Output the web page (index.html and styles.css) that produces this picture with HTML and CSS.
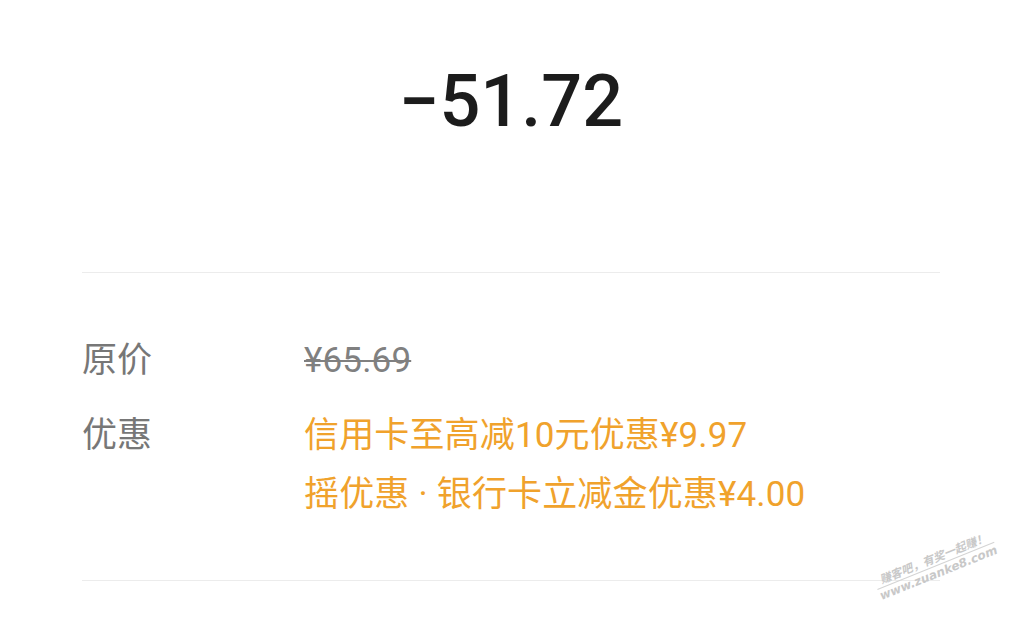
FILE: index.html
```html
<!DOCTYPE html>
<html lang="zh-CN">
<head>
    <meta charset="UTF-8">
    <title>账单详情</title>
    <link rel="stylesheet" href="styles.css">
</head>
<body>
    <div class="page">
        <div class="amount">−51.72</div>
        <div class="divider"></div>

        <div class="details">
            <div class="row">
                <div class="label">原价</div>
                <div class="value original">¥65.69</div>
            </div>
            <div class="row">
                <div class="label">优惠</div>
                <div class="value discounts">
                    <p>信用卡至高减10元优惠¥9.97</p>
                    <p>摇优惠<span class="dot">·</span>银行卡立减金优惠¥4.00</p>
                </div>
            </div>
        </div>

        <div class="divider"></div>
    </div>

    <div class="watermark">
        <div class="wm-top">赚客吧，有奖一起赚！</div>
        <div class="wm-bottom">www.zuanke8.com</div>
    </div>
</body>
</html>
```

FILE: styles.css
```css
body {
    margin: 0;
    background-color: #fff;
    font-family: Roboto, "Noto Sans CJK SC", sans-serif;
    overflow: hidden;
}
.page {
    padding: 0 80px 0 82px;
}
.amount {
    height: 272px;
    padding-top: 59px;
    box-sizing: border-box;
    text-align: center;
    font-size: 72px;
    font-weight: 500;
    line-height: 86px;
    color: #1c1c1c;
}
.divider {
    height: 1px;
    background-color: #ececec;
}
.details {
    padding-top: 66px;
    padding-bottom: 63px;
}
.row {
    display: flex;
    margin-bottom: 31px;
}
.row:last-child {
    margin-bottom: 0;
}
.label {
    width: 222px;
    font-size: 35px;
    line-height: 44px;
    color: #777;
}
.value {
    font-size: 35px;
    line-height: 44px;
    letter-spacing: 0.15px;
}
.original {
    color: #808080;
    text-decoration: line-through;
    text-decoration-thickness: 2px;
}
.discounts {
    color: #f0a22c;
}
.discounts p {
    margin: 0 0 15px 0;
}
.discounts p:last-child {
    margin-bottom: 0;
}
.dot {
    margin: 0 9px;
}
.watermark {
    position: absolute;
    left: 872px;
    top: 576px;
    transform: rotate(-22deg);
    transform-origin: left top;
    color: #c8c8c8;
    font-family: "DejaVu Sans", "Noto Sans CJK SC", sans-serif;
    font-style: italic;
    font-weight: bold;
    font-size: 11.5px;
    line-height: 14px;
}
.wm-top {
    padding-left: 6px;
    border-bottom: 1px solid #d4d4d4;
}
.wm-bottom {
    font-size: 12px;
}
```
